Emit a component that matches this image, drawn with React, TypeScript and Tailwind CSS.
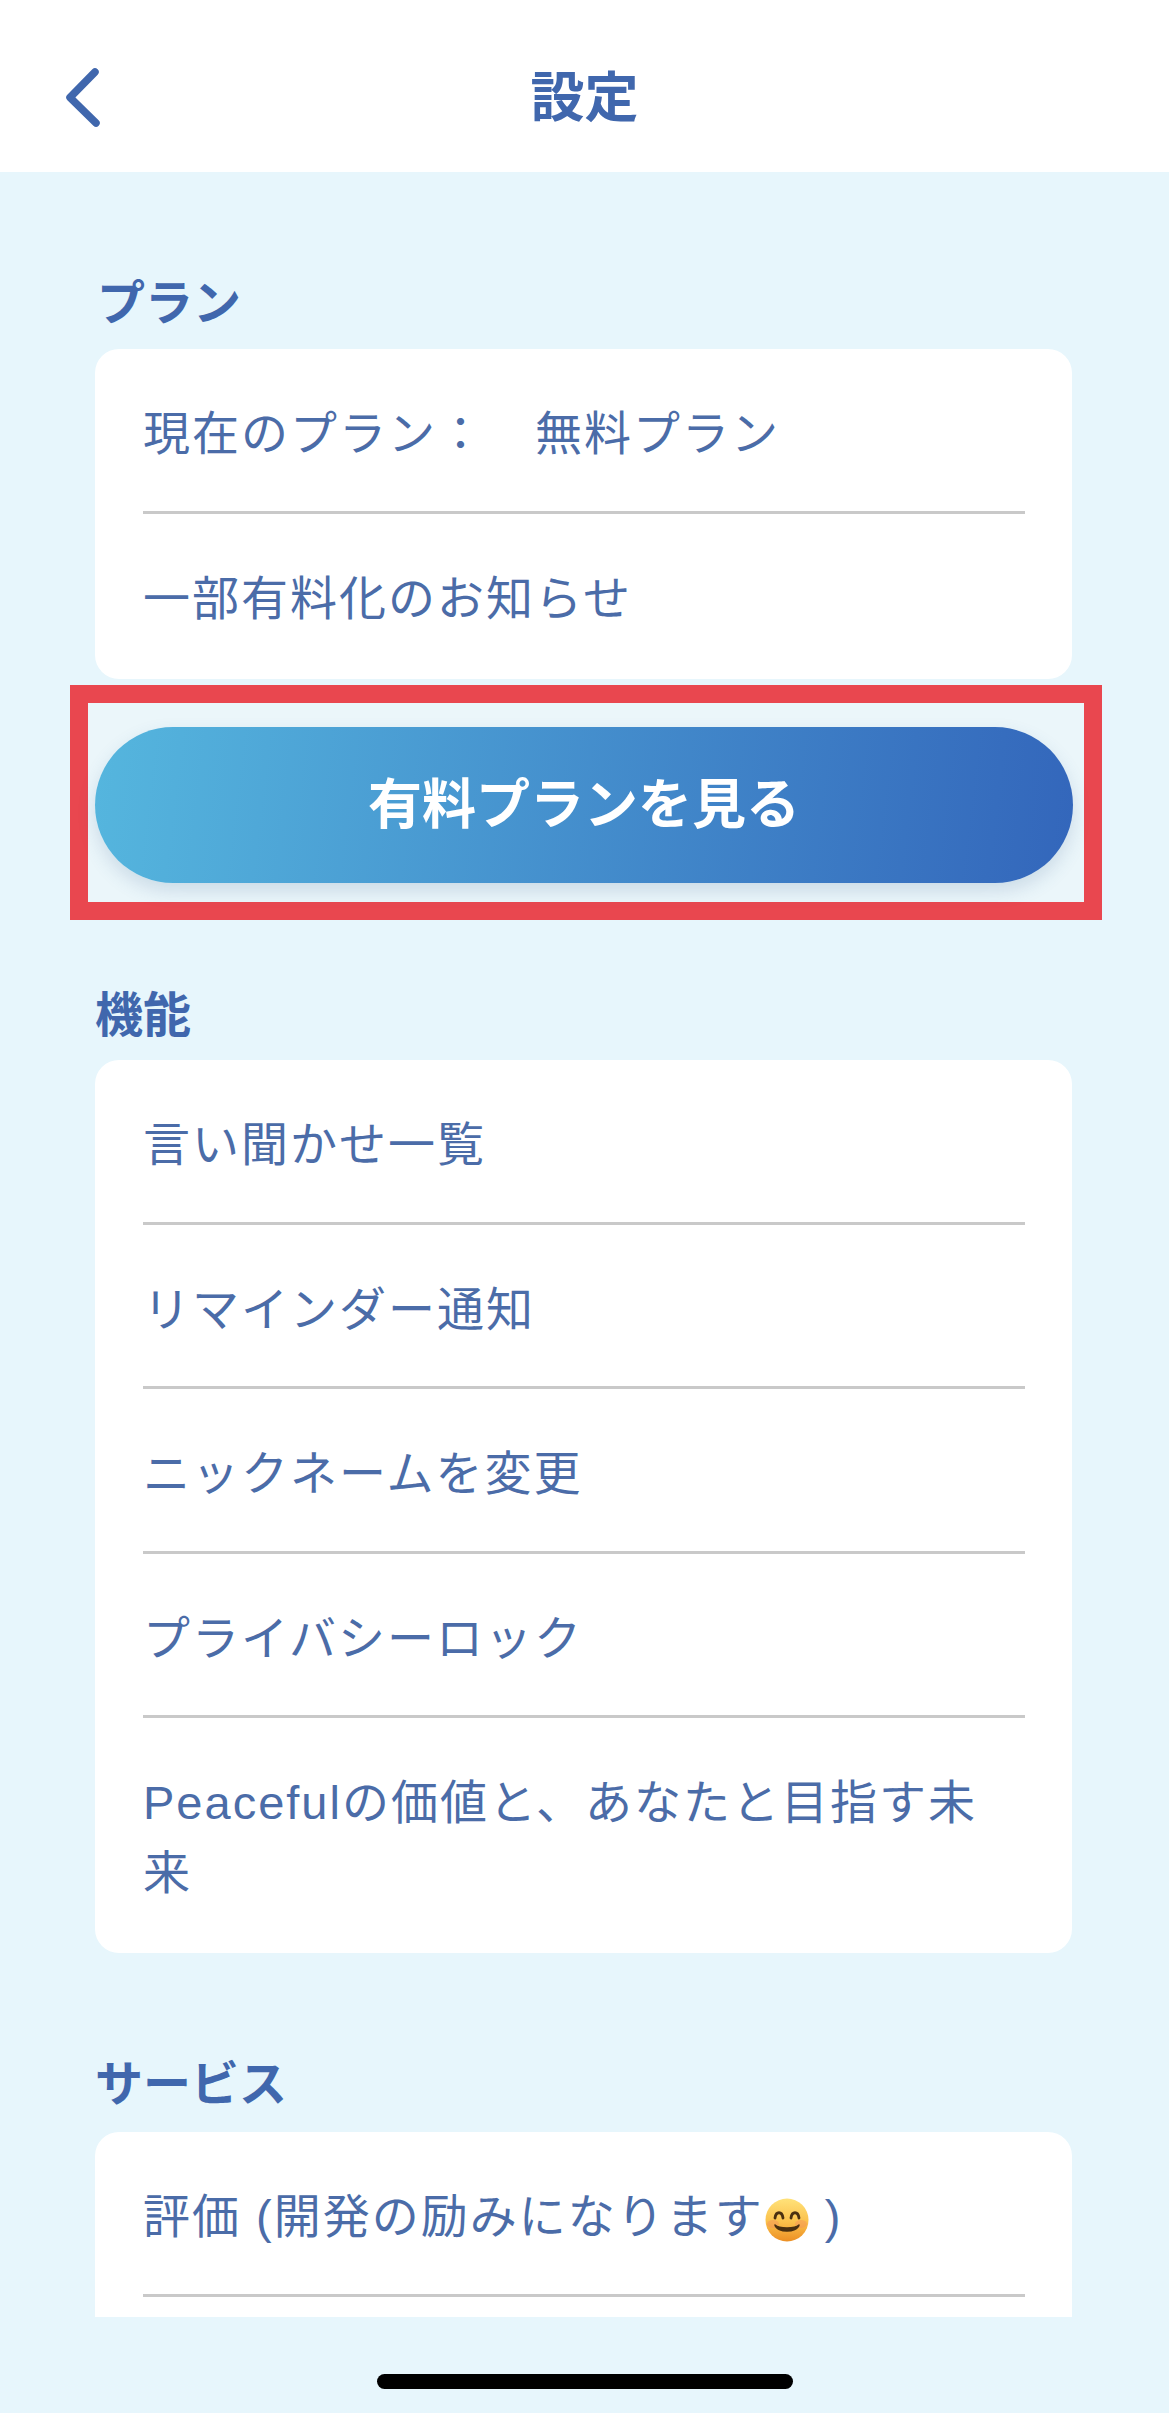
const FONT = "font-['Liberation_Sans','Noto_Sans_CJK_JP',sans-serif]";

function SmileEmoji() {
  return (
    <svg viewBox="0 0 44 44" className="inline-block w-[44px] h-[44px] align-[-9px] mx-[1px]">
      <defs>
        <linearGradient id="face" x1="0" y1="0" x2="0" y2="1">
          <stop offset="0%" stopColor="#ffe27a" />
          <stop offset="55%" stopColor="#fbc04a" />
          <stop offset="100%" stopColor="#ec8f24" />
        </linearGradient>
      </defs>
      <circle cx="22" cy="22" r="21.5" fill="url(#face)" />
      <ellipse cx="8" cy="26" rx="6" ry="4" fill="#f5915a" opacity="0.45" />
      <ellipse cx="36" cy="26" rx="6" ry="4" fill="#f5915a" opacity="0.45" />
      <path d="M10 20c1-7 7-7 8 0M26 20c1-7 7-7 8 0" fill="none" stroke="#4a3010" strokeWidth="2.8" strokeLinecap="round" />
      <path d="M10 27c4 4 20 4 24 0-2 8-22 8-24 0Z" fill="#4a3010" stroke="#4a3010" strokeWidth="1.5" strokeLinejoin="round" />
    </svg>
  );
}

function SectionTitle({ children, className }: { children: React.ReactNode; className?: string }) {
  return (
    <h2 className={`text-[48px] pt-[2px] leading-[58px] font-bold text-[#4067ad] ${className ?? ''}`}>
      {children}
    </h2>
  );
}

function Divider() {
  return <div className="h-[3px] bg-[#c9c9c9] ml-[48px] mr-[47px]" />;
}

function Row({ children, last }: { children: React.ReactNode; last: boolean }) {
  return (
    <div
      className={`pl-[48px] pr-[52px] pt-[50px] text-[47px] leading-[69.5px] tracking-[2px] text-[#4b6ca8] ${
        last ? 'pb-[46px]' : 'pb-[42px]'
      }`}
    >
      {children}
    </div>
  );
}

function Card({ rows, className }: { rows: React.ReactNode[]; className?: string }) {
  return (
    <div className={`bg-white rounded-[24px] ${className ?? ''}`}>
      {rows.map((row, i) => (
        <div key={i}>
          {i > 0 && <Divider />}
          <Row last={i === rows.length - 1}>{row}</Row>
        </div>
      ))}
    </div>
  );
}

export default function App() {
  return (
    <div className={`w-[1169px] h-[2413px] flex flex-col overflow-hidden bg-[#e7f6fc] ${FONT}`}>
      <header className="h-[172px] shrink-0 bg-white grid grid-cols-[1fr_auto_1fr] items-center pl-[64px] pt-[24px]">
        <svg viewBox="0 0 40 60" className="w-[40px] h-[60px]">
          <path d="M31 4 6 29.5 32 55" fill="none" stroke="#4067ad" strokeWidth="7.5" strokeLinecap="round" strokeLinejoin="round" />
        </svg>
        <h1 className="text-[54px] font-bold text-[#4067ad] leading-none -ml-[64px]">設定</h1>
        <div />
      </header>

      <main className="h-[2145px] shrink-0 overflow-hidden pl-[95px] pr-[97px] pt-[101px]">
        <SectionTitle className="mb-[16px] ml-[2px]">プラン</SectionTitle>
        <Card rows={['現在のプラン：　無料プラン', '一部有料化のお知らせ']} />

        <div className="mt-[6px] -ml-[25px] -mr-[30px] border-[18px] border-[#e9474f] bg-[#ebf6fa] pl-[7px] pr-[11px] pt-[24px] pb-[19px]">
          <button className="w-full h-[156px] rounded-full bg-[linear-gradient(97deg,#55b6de,#3366bb)] text-white text-[54px] font-bold shadow-[0_8px_18px_rgba(60,100,150,0.18)]">
            有料プランを見る
          </button>
        </div>

        <SectionTitle className="mt-[65px] mb-[15px]">機能</SectionTitle>
        <Card
          rows={[
            '言い聞かせ一覧',
            'リマインダー通知',
            'ニックネームを変更',
            'プライバシーロック',
            'Peacefulの価値と、あなたと目指す未来',
          ]}
        />

        <SectionTitle className="mt-[101px] mb-[18px]">サービス</SectionTitle>
        <Card
          className="h-[400px]"
          rows={[
            <>
              評価 (開発の励みになります
              <SmileEmoji /> )
            </>,
            '',
          ]}
        />
      </main>

      <footer className="flex-1 flex justify-center pt-[57px]">
        <div className="w-[416px] h-[15px] rounded-full bg-black" />
      </footer>
    </div>
  );
}
